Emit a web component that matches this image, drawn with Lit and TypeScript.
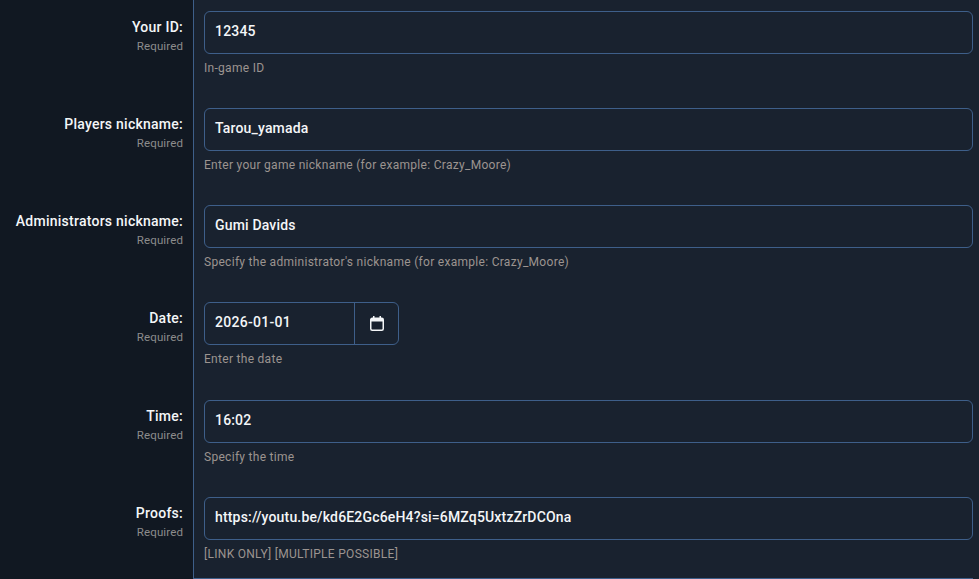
import { LitElement, css, html } from "lit";
import { customElement } from "lit/decorators.js";

interface Field { label: string; value: string; help: string; date?: boolean; }

const FIELDS: Field[] = [
  { label: "Your ID:", value: "12345", help: "In-game ID" },
  { label: "Players nickname:", value: "Tarou_yamada", help: "Enter your game nickname (for example: Crazy_Moore)" },
  { label: "Administrators nickname:", value: "Gumi Davids", help: "Specify the administrator's nickname (for example: Crazy_Moore)" },
  { label: "Date:", value: "2026-01-01", help: "Enter the date", date: true },
  { label: "Time:", value: "16:02", help: "Specify the time" },
  { label: "Proofs:", value: "https://youtu.be/kd6E2Gc6eH4?si=6MZq5UxtzZrDCOna", help: "[LINK ONLY] [MULTIPLE POSSIBLE]" },
];

@customElement("app-root")
export class AppRoot extends LitElement {
  static styles = css`
    :host {
      display: block;
      height: 579px;
      overflow: hidden;
      background: #19222f;
      padding-right: 6px;
      font-family: Roboto, "Liberation Sans", sans-serif;
      color: #fff;
    }
    .row {
      display: grid;
      grid-template-columns: 194px 1fr;
      height: 97.2px;
    }
    .row:last-child {
      height: 93px;
    }
    .side {
      background: #111822;
      border-right: 1px solid #3e5f8a;
      padding: 18.8px 10px 0 0;
      text-align: right;
    }
    .name {
      font-size: 14px;
      line-height: 17px;
      font-weight: 500;
      letter-spacing: 0.25px;
      color: #f4f6f8;
    }
    .req {
      font-size: 11.5px;
      line-height: 14px;
      margin-top: 3px;
      letter-spacing: 0.12px;
      color: #8c8c8c;
    }
    .main {
      box-sizing: border-box;
      padding: 10.8px 0 0 10px;
      min-width: 0;
    }
    .row:last-child .main {
      border-bottom: 1px solid #3e5f8a;
    }
    .input {
      box-sizing: border-box;
      height: 43px;
      border: 1px solid #3e5f8a;
      border-radius: 6px;
      display: flex;
      align-items: center;
      padding: 0 10px 2px;
      font-size: 14px;
      line-height: 17px;
      font-weight: 500;
      letter-spacing: 0.17px;
      color: #f4f6f8;
    }
    .date {
      width: 195px;
      padding: 0;
      letter-spacing: 0.27px;
    }
    .date .text {
      flex: 1;
      padding: 0 10px 2px;
    }
    .btn {
      box-sizing: border-box;
      width: 44px;
      height: 100%;
      border-left: 1px solid #3e5f8a;
      display: flex;
      align-items: center;
      justify-content: center;
      flex: none;
    }
    .help {
      margin-top: 7px;
      font-size: 12px;
      line-height: 14px;
      letter-spacing: 0.29px;
      color: #9c9490;
    }
  `;

  private calendar() {
    return html`<svg width="14" height="15" viewBox="0 0 14 15" fill="none">
      <rect x="0.75" y="2.25" width="12.5" height="12" rx="1.5" stroke="#f4f6f8" stroke-width="1.5"></rect>
      <rect x="1" y="2.5" width="12" height="3" fill="#f4f6f8"></rect>
      <path d="M3.75 0v3M10.25 0v3" stroke="#f4f6f8" stroke-width="1.5"></path>
    </svg>`;
  }

  render() {
    return FIELDS.map(
      (f) => html`<div class="row">
        <div class="side">
          <div class="name">${f.label}</div>
          <div class="req">Required</div>
        </div>
        <div class="main">
          ${f.date
            ? html`<div class="input date"><span class="text">${f.value}</span><span class="btn">${this.calendar()}</span></div>`
            : html`<div class="input">${f.value}</div>`}
          <div class="help">${f.help}</div>
        </div>
      </div>`
    );
  }
}
